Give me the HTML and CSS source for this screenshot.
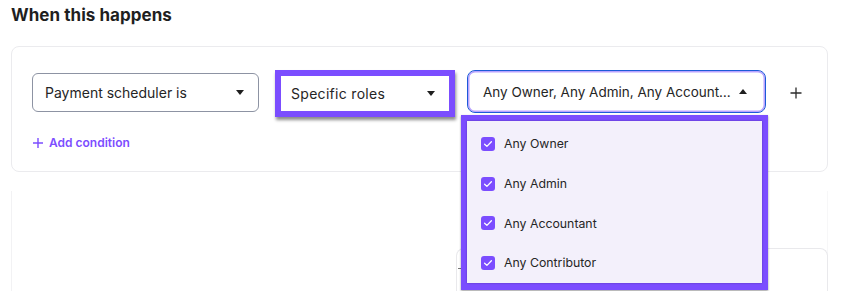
FILE: index.html
```html
<!DOCTYPE html>
<html lang="en">
<head>
    <meta charset="UTF-8">
    <title>Workflow trigger</title>
    <link rel="stylesheet" href="styles.css">
</head>
<body>
    <h2 class="title">When this happens</h2>

    <div class="card">
        <div class="row">
            <div class="select select-subject">
                <span>Payment scheduler is</span>
                <span class="caret down"></span>
            </div>

            <div class="highlight">
                <div class="select select-type">
                    <span>Specific roles</span>
                    <span class="caret down"></span>
                </div>
            </div>

            <div class="multi">
                <div class="select select-roles">
                    <span class="value">Any Owner, Any Admin, Any Account…</span>
                    <span class="caret up"></span>
                </div>
                <div class="dropdown">
                    <ul class="options">
                        <li><span class="check"><svg viewBox="0 0 14 14" width="14" height="14"><path d="M3.6 7.2l2.3 2.2 4.5-4.7" fill="none" stroke="#fff" stroke-width="1.3" stroke-linecap="round" stroke-linejoin="round"/></svg></span>Any Owner</li>
                        <li><span class="check"><svg viewBox="0 0 14 14" width="14" height="14"><path d="M3.6 7.2l2.3 2.2 4.5-4.7" fill="none" stroke="#fff" stroke-width="1.3" stroke-linecap="round" stroke-linejoin="round"/></svg></span>Any Admin</li>
                        <li><span class="check"><svg viewBox="0 0 14 14" width="14" height="14"><path d="M3.6 7.2l2.3 2.2 4.5-4.7" fill="none" stroke="#fff" stroke-width="1.3" stroke-linecap="round" stroke-linejoin="round"/></svg></span>Any Accountant</li>
                        <li><span class="check"><svg viewBox="0 0 14 14" width="14" height="14"><path d="M3.6 7.2l2.3 2.2 4.5-4.7" fill="none" stroke="#fff" stroke-width="1.3" stroke-linecap="round" stroke-linejoin="round"/></svg></span>Any Contributor</li>
                    </ul>
                </div>
            </div>

            <button class="add-row" aria-label="Add">
                <svg viewBox="0 0 14 14" width="14" height="14"><path d="M7 1.5v11M1.5 7h11" stroke="#2b2b2b" stroke-width="1.3"/></svg>
            </button>
        </div>

        <a class="add-condition" href="#">
            <svg viewBox="0 0 12 12" width="12" height="12"><path d="M6 1v10M1 6h10" stroke="#7c4dff" stroke-width="1.4"/></svg>
            Add condition
        </a>
    </div>

    <div class="next">
        <div class="next-inner">
            <span class="dash"></span>
        </div>
    </div>
</body>
</html>
```

FILE: styles.css
```css
body {
    margin: 0;
    background-color: #fff;
    font-family: "Inter", "Noto Sans", sans-serif;
    color: #222;
    overflow: hidden;
}
.title {
    margin: 0;
    padding: 5px 0 0 11px;
    height: 46px;
    box-sizing: border-box;
    font-size: 17px;
    font-weight: 700;
    color: #1f1f1f;
    letter-spacing: 0.05px;
}
.card {
    margin-left: 11px;
    width: 817px;
    height: 126px;
    box-sizing: border-box;
    border: 1px solid #ebebee;
    border-radius: 8px;
    padding: 23px 0 0 20px;
}
.row {
    display: flex;
    align-items: flex-start;
}
.select {
    display: flex;
    align-items: center;
    justify-content: space-between;
    box-sizing: border-box;
    background-color: #fff;
    font-size: 14px;
    color: #252525;
}
.select-subject {
    width: 227px;
    height: 39px;
    margin-top: 3px;
    padding: 0 14px 0 12px;
    border: 1px solid #8d93a3;
    border-radius: 6px;
}
.highlight {
    margin-left: 16px;
    width: 180px;
    height: 47px;
    box-sizing: border-box;
    padding: 6px;
    background-color: #7b4dff;
    box-shadow: 1px 3px 3px rgba(0, 0, 0, 0.45);
}
.select-type {
    height: 35px;
    padding: 0 14px 0 10px;
    letter-spacing: 0.3px;
}
.multi {
    position: relative;
    margin-left: 12px;
}
.select-roles {
    width: 299px;
    height: 43px;
    padding: 0 18px 0 15px;
    border: 1.5px solid #1d5bd8;
    border-radius: 8px;
    box-shadow: inset 0 0 0 1.5px #b9a3ff;
}
.value {
    white-space: nowrap;
    font-size: 13.5px;
}
.caret {
    width: 0;
    height: 0;
    border-left: 4px solid transparent;
    border-right: 4px solid transparent;
}
.caret.down {
    border-top: 5px solid #1f1f1f;
}
.caret.up {
    border-bottom: 5px solid #1f1f1f;
}
.dropdown {
    position: absolute;
    left: -6px;
    top: 45px;
    width: 307px;
    height: 175px;
    box-sizing: border-box;
    background-color: #7b4dff;
    padding: 6px 6px 7px 6px;
    box-shadow: 0 1px 2px rgba(0, 0, 0, 0.4);
    z-index: 2;
}
.options {
    list-style: none;
    margin: 0;
    padding: 3px 0 0 14px;
    height: 100%;
    box-sizing: border-box;
    background-color: #f3f0fb;
    box-shadow: 0 0 2px rgba(0, 0, 0, 0.3);
}
.options li {
    display: flex;
    align-items: center;
    height: 39.7px;
    font-size: 12.3px;
    color: #262626;
}
.check {
    display: inline-flex;
    align-items: center;
    justify-content: center;
    width: 14px;
    height: 14px;
    margin-right: 9px;
    border-radius: 3px;
    background-color: #7b4dff;
}
.add-row {
    margin: 16px 0 0 23px;
    padding: 0;
    border: none;
    background: none;
    width: 14px;
    height: 14px;
    display: flex;
}
.add-condition {
    display: inline-flex;
    align-items: center;
    gap: 5px;
    margin-top: 18px;
    font-size: 12px;
    font-weight: 600;
    color: #7c4dff;
    text-decoration: none;
}
.next {
    margin: 19px 0 0 11px;
    width: 817px;
    height: 101px;
    border-left: 1px solid #f2f2f4;
    border-right: 1px solid #f7f7f8;
    box-sizing: border-box;
    padding: 57px 0 0 444px;
}
.next-inner {
    height: 44px;
    box-sizing: border-box;
    border: 1px solid #e9e9ec;
    border-bottom: none;
    border-radius: 8px 8px 0 0;
    margin-right: -1px;
    position: relative;
}
.dash {
    position: absolute;
    left: 1px;
    top: 19px;
    width: 8px;
    height: 1px;
    background-color: #777;
}
```
